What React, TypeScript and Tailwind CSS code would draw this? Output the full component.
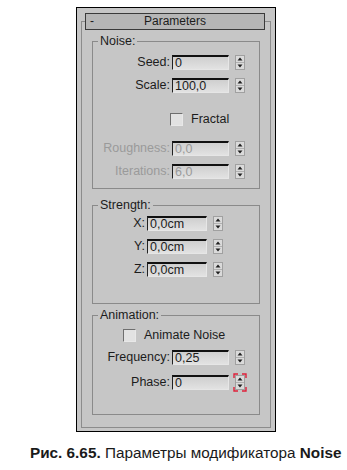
import React from 'react';

const FONT = "font-['Liberation_Sans','Arial',sans-serif]";

function Spinner({ keyed = false }: { keyed?: boolean }) {
  return (
    <svg width="14" height="19" viewBox="0 0 14 19" className="shrink-0 -my-[2px]">
      <rect x="2.5" y="2.5" width="9" height="14" fill="#dadada" stroke="#a0a0a0" />
      <line x1="3" y1="9.5" x2="11" y2="9.5" stroke="#b0b0b0" />
      <path d="M7 4.5 L9.5 7.5 L4.5 7.5 Z" fill="#1e1e1e" />
      <path d="M4.5 11.5 L9.5 11.5 L7 14.5 Z" fill="#1e1e1e" />
      {keyed && (
        <g stroke="#e0203a" strokeWidth="1.4" fill="none">
          <path d="M1 5 V1 H5" />
          <path d="M9 1 H13 V5" />
          <path d="M1 14 V18 H5" />
          <path d="M9 18 H13 V14" />
        </g>
      )}
    </svg>
  );
}

function Field({
  label,
  value,
  labelW,
  inputW,
  disabled = false,
  keyed = false,
  className = '',
}: {
  label: string;
  value: string;
  labelW: string;
  inputW: string;
  disabled?: boolean;
  keyed?: boolean;
  className?: string;
}) {
  return (
    <div className={`flex items-center h-[15px] ${className}`}>
      <span className={`${labelW} text-right pr-[2px] leading-[15px] whitespace-nowrap ${disabled ? 'text-[#9a9a9a]' : 'text-[#1c1c1c]'}`}>
        {label}
      </span>
      <div
        className={`${inputW} h-[15px] border-t-2 border-l border-t-[#111] border-l-[#222] border-r border-b border-r-[#e6e6e6] border-b-[#e6e6e6] bg-gradient-to-b from-[#cfcfcf] to-[#e2e2e2] pl-[2px] leading-[12px] ${disabled ? 'text-[#9a9a9a]' : 'text-[#1c1c1c]'}`}
      >
        {value}
      </div>
      <div className="ml-[4px]">
        <Spinner keyed={keyed} />
      </div>
    </div>
  );
}

function Check({ label, className = '' }: { label: string; className?: string }) {
  return (
    <div className={`flex items-center h-[15px] ${className}`}>
      <div className="w-[13px] h-[13px] border-t border-l border-t-[#6e6e6e] border-l-[#6e6e6e] border-r border-b border-r-[#e8e8e8] border-b-[#e8e8e8] bg-[#e2e2e2]" />
      <span className="ml-[8px] text-[#1c1c1c] leading-[15px]">{label}</span>
    </div>
  );
}

function Group({ title, className = '', children }: { title: string; className?: string; children: React.ReactNode }) {
  return (
    <fieldset className={`border border-[#8a8a8a] ${className}`}>
      <legend className="ml-[5px] px-[2px] leading-[14px] text-[#1c1c1c]">{title}</legend>
      {children}
    </fieldset>
  );
}

export default function App() {
  return (
    <div className={`w-[347px] h-[470px] bg-white overflow-hidden ${FONT}`}>
      <div className="pt-[7px] pl-[76px]">
        <div className="w-[200px] h-[425px] border border-black bg-[#c6c6c6] px-[4px] pt-[5px] text-[12.5px]">
          {/* Rollout header */}
          <div className="relative z-10 ml-[4px] w-[180px] h-[17px] border border-[#3a3a3a] bg-[#b6b6b6] flex items-center text-[12px]">
            <span className="w-[14px] pl-[4px] leading-[15px] text-[#1c1c1c]">-</span>
            <span className="flex-1 text-center pr-[14px] leading-[15px] text-[#1c1c1c]">Parameters</span>
          </div>

          {/* Rollout body */}
          <div className="-mt-[9px] h-[407px] border border-[#8c8c8c] px-[10px] pt-[12px]">
            <Group title="Noise:" className="h-[155px]">
              <Field label="Seed:" value="0" labelW="w-[79px]" inputW="w-[57px]" className="mt-[7px]" />
              <Field label="Scale:" value="100,0" labelW="w-[79px]" inputW="w-[57px]" className="mt-[8px]" />
              <div className="mt-[19px] pl-[77px]">
                <Check label="Fractal" />
              </div>
              <Field label="Roughness:" value="0,0" labelW="w-[79px]" inputW="w-[57px]" disabled className="mt-[14px]" />
              <Field label="Iterations:" value="6,0" labelW="w-[79px]" inputW="w-[57px]" disabled className="mt-[8px]" />
            </Group>

            <Group title="Strength:" className="mt-[9px] h-[106px]">
              <Field label="X:" value="0,0cm" labelW="w-[54px]" inputW="w-[60px]" className="mt-[4px]" />
              <Field label="Y:" value="0,0cm" labelW="w-[54px]" inputW="w-[60px]" className="mt-[8px]" />
              <Field label="Z:" value="0,0cm" labelW="w-[54px]" inputW="w-[60px]" className="mt-[8px]" />
            </Group>

            <Group title="Animation:" className="mt-[4px] h-[107px]">
              <div className="mt-[6px] pl-[30px]">
                <Check label="Animate Noise" />
              </div>
              <Field label="Frequency:" value="0,25" labelW="w-[79px]" inputW="w-[57px]" className="mt-[7px]" />
              <Field label="Phase:" value="0" labelW="w-[79px]" inputW="w-[57px]" keyed className="mt-[10px]" />
            </Group>
          </div>
        </div>
      </div>

      <div className="mt-[12px] pl-[30px] text-[15.3px] leading-[18px] text-[#1a1a1a] whitespace-nowrap">
        <b>Рис. 6.65.</b> Параметры модификатора <b>Noise</b>
      </div>
    </div>
  );
}
